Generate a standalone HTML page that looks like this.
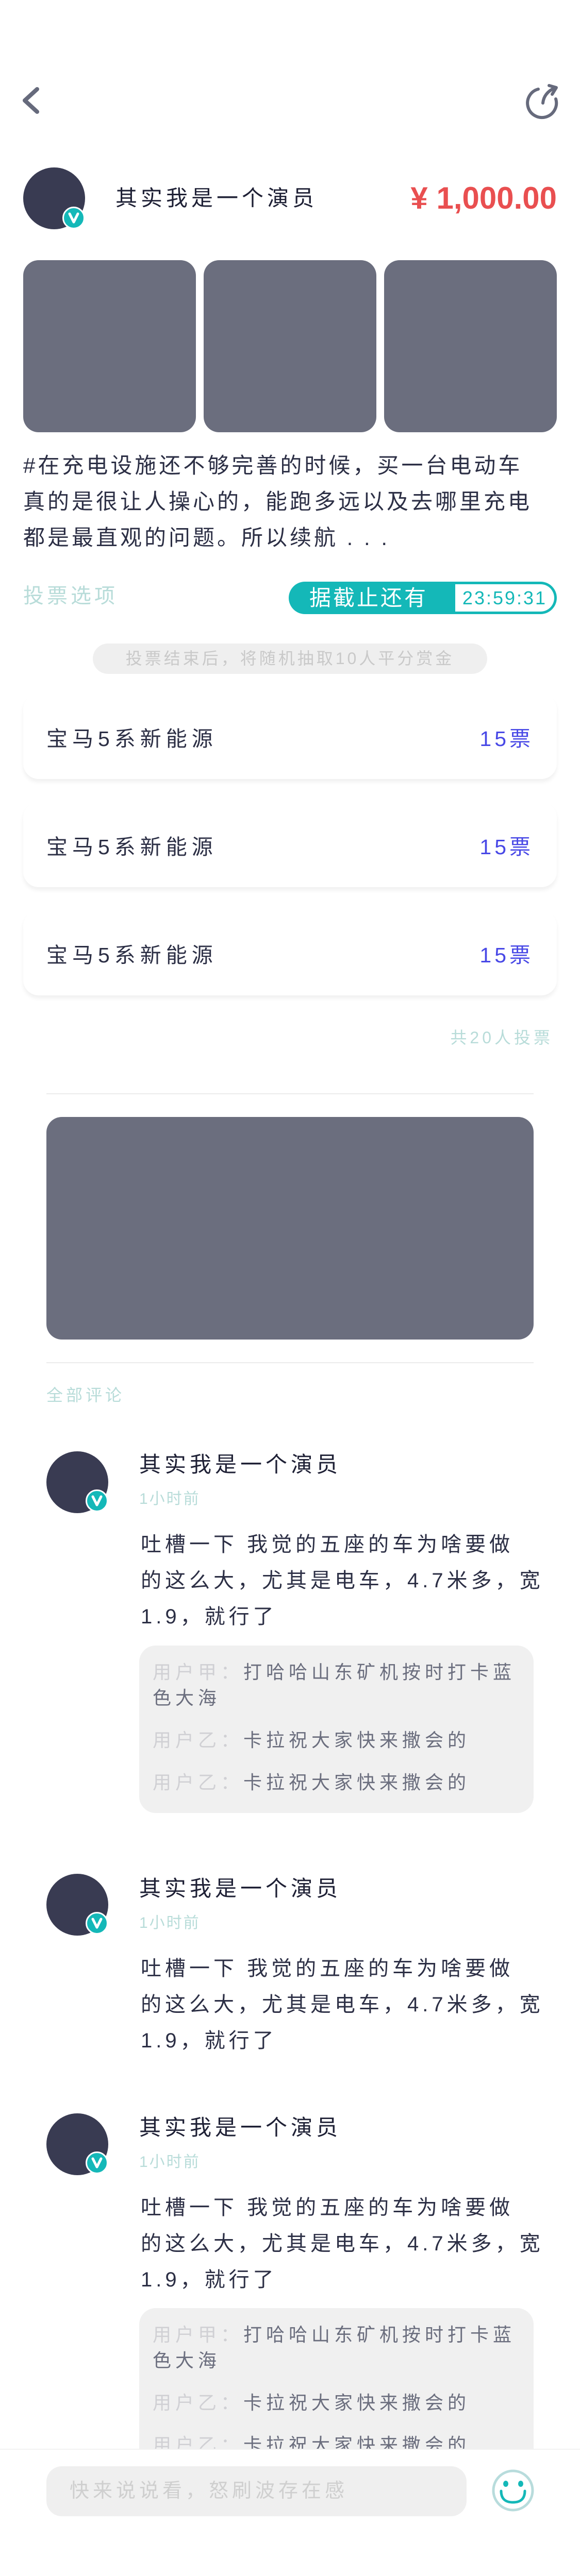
<!DOCTYPE html>
<html><head><meta charset="utf-8"><style>
*{margin:0;padding:0;box-sizing:border-box}
body{width:1125px;height:5004px;background:#fff;position:relative;overflow:hidden;font-family:"Liberation Sans","Noto Sans CJK SC",sans-serif;color:#2c2f45}
.a{position:absolute;white-space:nowrap}
.av{position:absolute;border-radius:50%;background:#393b52}
.bd{position:absolute;width:44px;height:44px;border-radius:50%;background:#14b8b8;border:3px solid #fff}
.img{position:absolute;background:#6b6e7e;border-radius:30px}
.card{position:absolute;left:45px;width:1035px;height:165px;background:#fff;border-radius:30px;box-shadow:0 6px 8px rgba(0,0,0,0.06)}
.card .t{position:absolute;left:45px;top:50%;transform:translateY(-50%);font-size:41px;letter-spacing:9px;color:#2c2f45}
.card .v{position:absolute;right:45px;top:50%;transform:translateY(-50%);font-size:41px;letter-spacing:6px;color:#4848e6}
.nm{font-size:42px;letter-spacing:7px;color:#1e2035;line-height:1}
.tm{font-size:30px;color:#b8dcd9;letter-spacing:3px;line-height:1}
.ct{position:absolute;left:273px;font-size:40px;letter-spacing:7px;line-height:70px;color:#2c2f45;white-space:nowrap}
.rb{position:absolute;left:270px;width:765px;background:#f0f0f0;border-radius:32px;padding:27px 10px 30px 26px;font-size:36px;letter-spacing:8px;line-height:50px;color:#6b6e7e;white-space:nowrap;overflow:hidden}
.rb p{margin-bottom:32px}
.rb span{color:#d0d0d4}
</style></head><body>

<svg class="a" style="left:0;top:130px" width="120" height="120"><polyline points="72,43 48,65 72,87" fill="none" stroke="#666a7c" stroke-width="8" stroke-linecap="round" stroke-linejoin="round"/></svg>
<svg class="a" style="left:980px;top:130px" width="120" height="120">
<path d="M64 43 A28 28 0 1 0 98 62" fill="none" stroke="#666a7c" stroke-width="6" stroke-linecap="round"/>
<path d="M73 70 Q75 50 97 40" fill="none" stroke="#666a7c" stroke-width="6" stroke-linecap="round"/>
<path d="M85 36 L99 40 L91 53" fill="none" stroke="#666a7c" stroke-width="6" stroke-linecap="round" stroke-linejoin="round"/>
</svg>

<div class="av" style="left:45px;top:325px;width:120px;height:120px"></div>
<div class="bd" style="left:121px;top:401px"><svg width="38" height="38" viewBox="0 0 38 38"><path d="M11 11 L19 27 L27 11" fill="none" stroke="#fff" stroke-width="5" stroke-linecap="round" stroke-linejoin="round"/></svg></div>
<div class="a nm" style="left:224px;top:364px">其实我是一个演员</div>
<div class="a" style="right:45px;top:350px;font-size:60px;font-weight:bold;color:#e94f50;line-height:70px">¥ 1,000.00</div>

<div class="img" style="left:45px;top:505px;width:335px;height:334px"></div>
<div class="img" style="left:395px;top:505px;width:335px;height:334px"></div>
<div class="img" style="left:745px;top:505px;width:335px;height:334px"></div>

<div class="a" style="left:45px;top:869px;font-size:42px;letter-spacing:5px;line-height:70px;color:#2c2f45">#在充电设施还不够完善的时候，买一台电动车<br>真的是很让人操心的，能跑多远以及去哪里充电<br>都是最直观的问题。所以续航 . . .</div>

<div class="a" style="left:45px;top:1134px;font-size:40px;letter-spacing:6px;color:#b8dcd9;line-height:46px">投票选项</div>
<div class="a" style="left:560px;top:1129px;width:520px;height:63px;border-radius:32px;background:#14b8b8">
<div class="a" style="left:40px;top:0;line-height:63px;font-size:42px;color:#fff;letter-spacing:4px">据截止还有</div>
<div class="a" style="left:323px;top:5px;width:192px;height:53px;background:#fff;border-radius:0 27px 27px 0;font-size:36px;color:#14b8b8;line-height:53px;text-align:center;letter-spacing:3px">23:59:31</div>
</div>

<div class="a" style="left:180px;top:1249px;width:765px;height:59px;border-radius:30px;background:#efefef;text-align:center;line-height:59px;font-size:32px;letter-spacing:5px;color:#c9c9c9">投票结束后，将随机抽取10人平分赏金</div>

<div class="card" style="top:1347px"><div class="t">宝马5系新能源</div><div class="v">15票</div></div>
<div class="card" style="top:1557px"><div class="t">宝马5系新能源</div><div class="v">15票</div></div>
<div class="card" style="top:1767px"><div class="t">宝马5系新能源</div><div class="v">15票</div></div>

<div class="a" style="right:52px;top:1995px;font-size:32px;letter-spacing:6px;color:#b8dcd9;line-height:38px">共20人投票</div>
<div class="a" style="left:90px;top:2122px;width:945px;height:2px;background:#ececec"></div>
<div class="img" style="left:90px;top:2168px;width:945px;height:432px"></div>
<div class="a" style="left:90px;top:2644px;width:945px;height:2px;background:#ececec"></div>
<div class="a" style="left:90px;top:2689px;font-size:32px;letter-spacing:6px;color:#b8dcd9;line-height:38px">全部评论</div>

<!-- comment 1 -->
<div class="av" style="left:90px;top:2817px;width:120px;height:120px"></div>
<div class="bd" style="left:166px;top:2891px"><svg width="38" height="38" viewBox="0 0 38 38"><path d="M11 11 L19 27 L27 11" fill="none" stroke="#fff" stroke-width="5" stroke-linecap="round" stroke-linejoin="round"/></svg></div>
<div class="a nm" style="left:270px;top:2822px">其实我是一个演员</div>
<div class="a tm" style="left:270px;top:2895px">1小时前</div>
<div class="ct" style="top:2963px">吐槽一下 我觉的五座的车为啥要做<br>的这么大，尤其是电车，4.7米多，宽<br>1.9，就行了</div>
<div class="rb" style="top:3194px;height:325px"><p><span>用户甲：</span>打哈哈山东矿机按时打卡蓝<br>色大海</p><p><span>用户乙：</span>卡拉祝大家快来撒会的</p><p><span>用户乙：</span>卡拉祝大家快来撒会的</p></div>

<!-- comment 2 -->
<div class="av" style="left:90px;top:3637px;width:120px;height:120px"></div>
<div class="bd" style="left:166px;top:3711px"><svg width="38" height="38" viewBox="0 0 38 38"><path d="M11 11 L19 27 L27 11" fill="none" stroke="#fff" stroke-width="5" stroke-linecap="round" stroke-linejoin="round"/></svg></div>
<div class="a nm" style="left:270px;top:3645px">其实我是一个演员</div>
<div class="a tm" style="left:270px;top:3718px">1小时前</div>
<div class="ct" style="top:3786px">吐槽一下 我觉的五座的车为啥要做<br>的这么大，尤其是电车，4.7米多，宽<br>1.9，就行了</div>

<!-- comment 3 -->
<div class="av" style="left:90px;top:4102px;width:120px;height:120px"></div>
<div class="bd" style="left:166px;top:4176px"><svg width="38" height="38" viewBox="0 0 38 38"><path d="M11 11 L19 27 L27 11" fill="none" stroke="#fff" stroke-width="5" stroke-linecap="round" stroke-linejoin="round"/></svg></div>
<div class="a nm" style="left:270px;top:4109px">其实我是一个演员</div>
<div class="a tm" style="left:270px;top:4182px">1小时前</div>
<div class="ct" style="top:4250px">吐槽一下 我觉的五座的车为啥要做<br>的这么大，尤其是电车，4.7米多，宽<br>1.9，就行了</div>
<div class="rb" style="top:4480px;height:273px;border-radius:32px 32px 0 0"><p><span>用户甲：</span>打哈哈山东矿机按时打卡蓝<br>色大海</p><p><span>用户乙：</span>卡拉祝大家快来撒会的</p><p><span>用户乙：</span>卡拉祝大家快来撒会的</p></div>

<!-- bottom bar -->
<div class="a" style="left:0;top:4753px;width:1125px;height:251px;background:#fff;border-top:2px solid #f2f2f2"></div>
<div class="a" style="left:90px;top:4787px;width:815px;height:97px;border-radius:30px;background:#efefef;line-height:97px;padding-left:45px;font-size:38px;letter-spacing:7px;color:#cfcfcf">快来说说看，怒刷波存在感</div>
<svg class="a" style="left:950px;top:4790px" width="90" height="90">
<circle cx="45" cy="44" r="38" fill="none" stroke="#b8dcdc" stroke-width="5"/>
<ellipse cx="31" cy="31" rx="5" ry="6" fill="#14b8b8"/>
<ellipse cx="60" cy="31" rx="5" ry="6" fill="#14b8b8"/>
<path d="M22 45 Q22 67 45 67 Q68 67 68 45" fill="none" stroke="#14b8b8" stroke-width="5" stroke-linecap="round"/>
</svg>
</body></html>
